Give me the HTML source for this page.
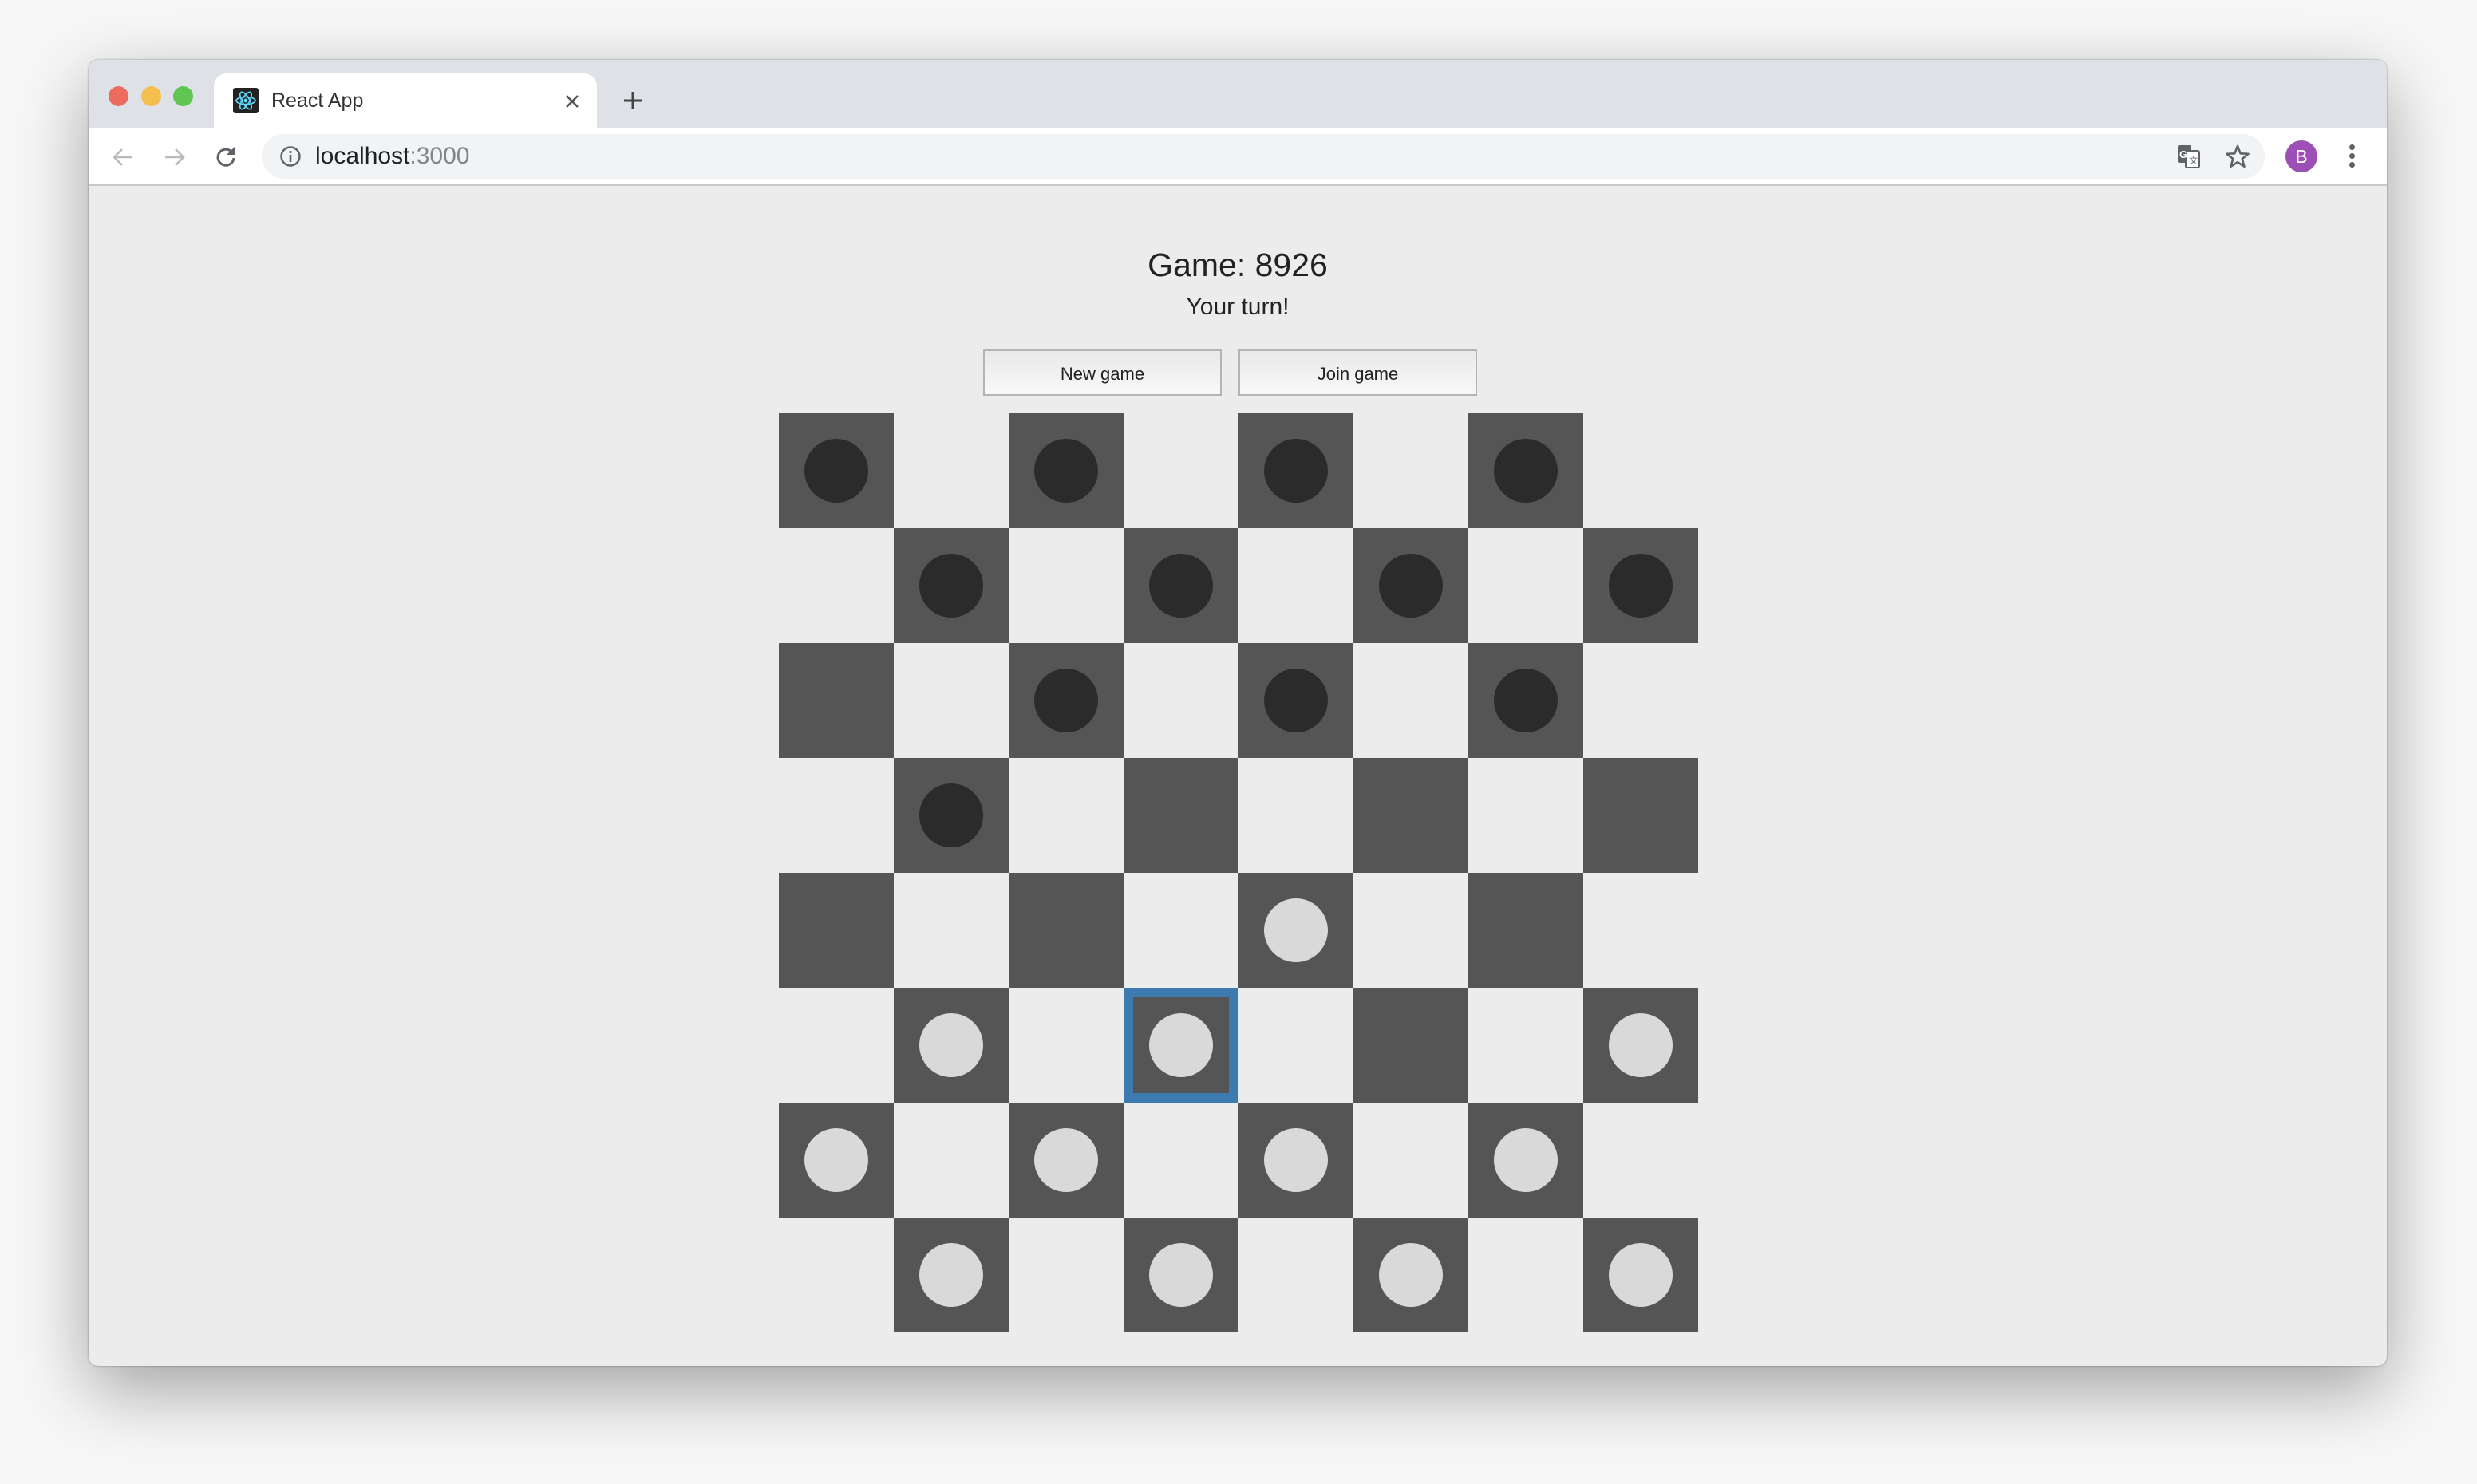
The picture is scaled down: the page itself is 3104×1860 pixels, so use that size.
<!DOCTYPE html>
<html><head><meta charset="utf-8"><style>
*{box-sizing:border-box;margin:0;padding:0}
body{width:3104px;height:1860px;background:#f7f7f7;position:relative;overflow:hidden;font-family:"Liberation Sans",sans-serif}
.win{position:absolute;left:111px;top:75px;width:2880px;height:1637px;border-radius:12px;overflow:hidden;background:#ececec;box-shadow:0 30px 90px rgba(0,0,0,.35),0 0 2px rgba(0,0,0,.4)}
.strip{position:absolute;left:0;top:0;width:100%;height:85px;background:#dee1e6}
.dot{position:absolute;top:33px;width:25px;height:25px;border-radius:50%}
.tab{position:absolute;left:157px;top:17px;width:480px;height:70px;background:#fff;border-radius:16px 16px 0 0}
.tb{position:absolute;left:0;top:85px;width:100%;height:73px;background:#fff;border-bottom:2px solid #c8c8c8}
.omni{position:absolute;left:217px;top:8px;width:2510px;height:56px;background:#f1f3f4;border-radius:28px}
.board{position:absolute;left:865px;top:443px;width:1152px;height:1152px;display:grid;grid-template-columns:repeat(8,144px);grid-template-rows:repeat(8,144px)}
.sq{position:relative}
.d{background:#555}
.p{position:absolute;left:32px;top:32px;width:80px;height:80px;border-radius:50%}
.b{background:#2b2b2b}.w{background:#d9d9d9}
.sel{box-shadow:inset 0 0 0 12px #3d7ab0}
.btn{position:absolute;top:363px;width:299px;height:58px;border:2px solid #b4b4b4;background:linear-gradient(#e9e9e9,#f8f8f8);font-size:22px;color:#222;text-align:center;line-height:58px}
</style></head><body>
<div class="win">
<div class="strip">
<div class="dot" style="left:25px;background:#ed6a5e"></div>
<div class="dot" style="left:66px;background:#f5bf4f"></div>
<div class="dot" style="left:106px;background:#61c554"></div>
<div class="tab">
<svg style="position:absolute;left:24px;top:18px" width="32" height="32" viewBox="0 0 32 32"><rect width="32" height="32" rx="3" fill="#222"/><g fill="none" stroke="#61dafb" stroke-width="1.6"><ellipse cx="16" cy="16" rx="12" ry="4.6"/><ellipse cx="16" cy="16" rx="12" ry="4.6" transform="rotate(60 16 16)"/><ellipse cx="16" cy="16" rx="12" ry="4.6" transform="rotate(120 16 16)"/></g><circle cx="16" cy="16" r="2.4" fill="#61dafb"/></svg>
<div style="position:absolute;left:72px;top:20px;font-size:25px;color:#333">React App</div>
<svg style="position:absolute;left:440px;top:26px" width="18" height="18" viewBox="0 0 18 18"><path d="M2 2L16 16M16 2L2 16" stroke="#555" stroke-width="2.6"/></svg>
</div>
<svg style="position:absolute;left:670px;top:39px" width="24" height="24" viewBox="0 0 24 24"><path d="M12 1V23M1 12H23" stroke="#444" stroke-width="3"/></svg>
</div>
<div class="tb">
<svg style="position:absolute;left:28px;top:22px" width="30" height="30" viewBox="0 0 30 30"><path d="M27 15H4M14 5L4 15L14 25" fill="none" stroke="#bbb" stroke-width="2.6"/></svg>
<svg style="position:absolute;left:93px;top:22px" width="30" height="30" viewBox="0 0 30 30"><path d="M3 15H26M16 5L26 15L16 25" fill="none" stroke="#bbb" stroke-width="2.6"/></svg>
<svg style="position:absolute;left:157px;top:21px" width="32" height="32" viewBox="0 0 32 32"><path d="M25 17A10 10 0 1 1 22 9" fill="none" stroke="#5f6368" stroke-width="3"/><path d="M26 3V13H16Z" fill="#5f6368"/></svg>
<div class="omni">
<svg style="position:absolute;left:22px;top:14px" width="28" height="28" viewBox="0 0 28 28"><circle cx="14" cy="14" r="11.5" fill="none" stroke="#5f6368" stroke-width="2.4"/><rect x="12.7" y="12" width="2.6" height="9" fill="#5f6368"/><circle cx="14" cy="8.5" r="1.6" fill="#5f6368"/></svg>
<div style="position:absolute;left:67px;top:11px;font-size:30px;color:#202124">localhost<span style="color:#80868b">:3000</span></div>
<svg style="position:absolute;left:2400px;top:13px" width="30" height="30" viewBox="0 0 30 30"><rect x="1" y="1" width="17" height="22" rx="2" fill="#5f6368"/><rect x="11" y="8" width="17" height="21" rx="2" fill="#fff" stroke="#5f6368" stroke-width="2"/><text x="3" y="17" font-size="13" font-weight="bold" fill="#fff" font-family="Liberation Sans">G</text><text x="15" y="24" font-size="11" fill="#5f6368" font-family="Liberation Sans">文</text></svg>
<svg style="position:absolute;left:2460px;top:12px" width="32" height="32" viewBox="0 0 32 32"><path d="M16 3L19.6 12.3L29.5 12.8L21.8 19L24.4 28.7L16 23.2L7.6 28.7L10.2 19L2.5 12.8L12.4 12.3Z" fill="none" stroke="#5f6368" stroke-width="2.6" stroke-linejoin="round"/></svg>
</div>
<div style="position:absolute;left:2753px;top:16px;width:40px;height:40px;border-radius:50%;background:#9c4fb4;color:#fff;font-size:23px;text-align:center;line-height:40px">B</div>
<div style="position:absolute;left:2833px;top:21px;width:7px">
<div style="width:7px;height:7px;border-radius:50%;background:#5f6368;margin-bottom:4px"></div><div style="width:7px;height:7px;border-radius:50%;background:#5f6368;margin-bottom:4px"></div><div style="width:7px;height:7px;border-radius:50%;background:#5f6368"></div></div>
</div>
<div style="position:absolute;left:0;width:100%;top:234px;text-align:center;font-size:41px;color:#222">Game: 8926</div>
<div style="position:absolute;left:0;width:100%;top:293px;text-align:center;font-size:30px;color:#222">Your turn!</div>
<div class="btn" style="left:1121px">New game</div>
<div class="btn" style="left:1441px">Join game</div>
<div class="board">
<div class="sq d"><div class="p b"></div></div><div class="sq"></div><div class="sq d"><div class="p b"></div></div><div class="sq"></div><div class="sq d"><div class="p b"></div></div><div class="sq"></div><div class="sq d"><div class="p b"></div></div><div class="sq"></div>
<div class="sq"></div><div class="sq d"><div class="p b"></div></div><div class="sq"></div><div class="sq d"><div class="p b"></div></div><div class="sq"></div><div class="sq d"><div class="p b"></div></div><div class="sq"></div><div class="sq d"><div class="p b"></div></div>
<div class="sq d"></div><div class="sq"></div><div class="sq d"><div class="p b"></div></div><div class="sq"></div><div class="sq d"><div class="p b"></div></div><div class="sq"></div><div class="sq d"><div class="p b"></div></div><div class="sq"></div>
<div class="sq"></div><div class="sq d"><div class="p b"></div></div><div class="sq"></div><div class="sq d"></div><div class="sq"></div><div class="sq d"></div><div class="sq"></div><div class="sq d"></div>
<div class="sq d"></div><div class="sq"></div><div class="sq d"></div><div class="sq"></div><div class="sq d"><div class="p w"></div></div><div class="sq"></div><div class="sq d"></div><div class="sq"></div>
<div class="sq"></div><div class="sq d"><div class="p w"></div></div><div class="sq"></div><div class="sq d sel"><div class="p w"></div></div><div class="sq"></div><div class="sq d"></div><div class="sq"></div><div class="sq d"><div class="p w"></div></div>
<div class="sq d"><div class="p w"></div></div><div class="sq"></div><div class="sq d"><div class="p w"></div></div><div class="sq"></div><div class="sq d"><div class="p w"></div></div><div class="sq"></div><div class="sq d"><div class="p w"></div></div><div class="sq"></div>
<div class="sq"></div><div class="sq d"><div class="p w"></div></div><div class="sq"></div><div class="sq d"><div class="p w"></div></div><div class="sq"></div><div class="sq d"><div class="p w"></div></div><div class="sq"></div><div class="sq d"><div class="p w"></div></div>
</div>
</div>
</body></html>
